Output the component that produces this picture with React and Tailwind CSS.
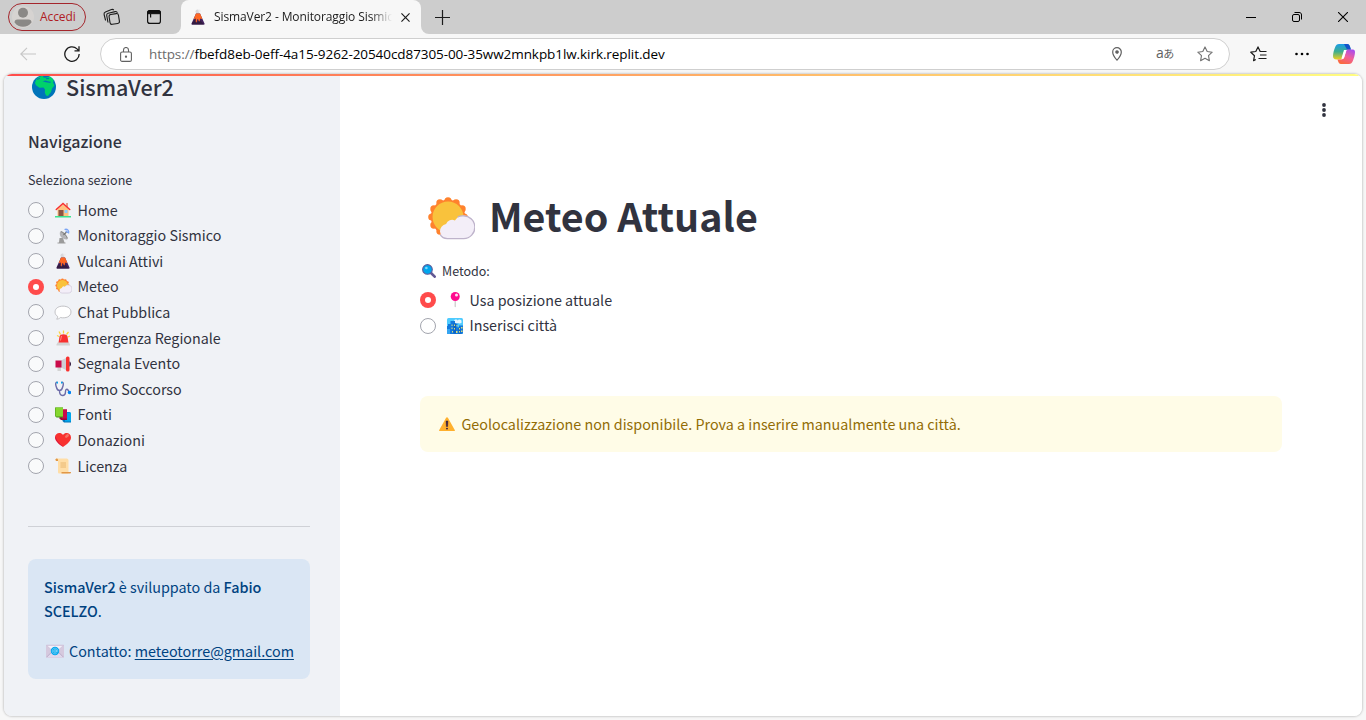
import React from "react";

/* ---------- emoji drawings (32 x 32 grid) ---------- */
const Emoji = ({ className = "w-4 h-4", children }) => (
  <svg viewBox="0 0 32 32" className={`shrink-0 ${className}`} fill="none">{children}</svg>
);

const House = () => (
  <Emoji>
    <path d="M22 2h4v8h-4z" fill="#E39D89" />
    <path d="M5 14 16 5l11 9v15H5z" fill="#FFC280" />
    <path d="M7 16h10v13H7z" fill="#8C5543" />
    <path d="M19 16h6v6h-6z" fill="#8CCDFF" />
    <path d="M2.500 15 16 3l13.500 12" stroke="#F8312F" strokeWidth="3" strokeLinecap="round" />
    <path d="M0 28h32v3H0z" fill="#3BE38F" />
  </Emoji>
);
const Satellite = () => (
  <Emoji>
    <path d="M9 20h7l3 9h2v2H5v-2h3z" fill="#9B9B9B" />
    <path d="M10 8c-2 6 2 14 13 15 2 0 2-1 1.500-2L13 7c-1-1-2.500-.5-3 1z" fill="#B4B4B8" />
    <path d="M12 7c5 2 10 8 13 14" stroke="#8C8C8C" strokeWidth="2.500" />
    <path d="m17 14 6-6" stroke="#777" strokeWidth="2.500" />
    <path d="M19 3c6-2 10 3 8 8M21 6c2 0 4 2 4 4" stroke="#7AA5F5" strokeWidth="2.500" />
  </Emoji>
);
const Volcano = ({ className }) => (
  <Emoji className={className}>
    <circle cx="15" cy="5" r="4" fill="#D8D8DC" /><circle cx="19" cy="3.500" r="2.500" fill="#ECECEF" />
    <path d="M12 9h8l9 20c.5 1.500 0 2-1 2H4c-1 0-1.500-.5-1-2z" fill="#44235E" />
    <path d="M4 28 12 19l3 8 4-6 9 10H4z" fill="#321B41" />
    <path d="M12 9h8l4.500 10c-2 2-3 0-4 0s0 6-2 6-1-5-3-5-1 7-3 7 0-7-1.500-8c-1 0-2 2-3.500 1z" fill="#FF6723" />
  </Emoji>
);
const SunCloud = ({ className }) => (
  <Emoji className={className}>
    <g fill="#FF822D">
      <circle cx="14" cy="14" r="11.500" />
      {[[14, 3.200], [19.400, 4.600], [23.400, 8.600], [24.800, 14], [8.600, 4.600], [4.600, 8.600], [3.200, 14], [4.600, 19.400], [8.600, 23.400]].map(([x, y]) => (
        <circle key={`${x}-${y}`} cx={x} cy={y} r="2.400" />
      ))}
    </g>
    <circle cx="14" cy="14" r="10.300" fill="#F9C23C" />
    <path d="M13.500 28.500a5 5 0 0 1-.8-9.900 4.300 4.300 0 0 1 5.900-2.300A7 7 0 0 1 31.500 21a7.300 7.300 0 0 1-7 7.500z" fill="#F3EEF8" />
    <path d="M20.500 13.900a7.300 7.300 0 0 1 3.700-.6 7.500 7.500 0 0 1 .3 15.100H13.500c-2 0-3.700-.9-4.700-2.600" stroke="#BEB3CB" strokeWidth=".9" />
  </Emoji>
);
const Bubble = () => (
  <Emoji className="w-[18px] h-[17px]">
    <path d="M16 4C7 4 1 8.500 1 15c0 4 2 6.500 5 8.500.3 2-1 4-2 5 3 0 5-1 7-3 10 2 20-1.500 20-10.500C31 8.500 25 4 16 4z" fill="#fff" stroke="#B4B4B8" strokeWidth="1.500" />
  </Emoji>
);
const Siren = () => (
  <Emoji>
    <path d="m8 3 3 6M17 1v6M27 4l-4 5M4 11l4 2M30 12l-4 2" stroke="#FCD53F" strokeWidth="2.500" />
    <path d="M9 13c1-6 15-6 16 0l2 13H7z" fill="#F8312F" />
    <path d="m13 12-2 9" stroke="#FF8A80" strokeWidth="2" />
    <path d="M5 25h23l2 4v2H3v-2z" fill="#D3D3D3" />
  </Emoji>
);
const Megaphone = () => (
  <Emoji>
    <path d="M5 19h7v11H5z" fill="#D3D3D3" />
    <path d="M12 9 24 3v26l-12-6z" fill="#CFCFD4" />
    <path d="M1 9h12v14H1z" fill="#CA0B4A" />
    <rect x="22" y="1" width="7" height="30" rx="3" fill="#F8312F" />
    <path d="M29 11c4 1 4 9 0 10z" fill="#321B41" />
  </Emoji>
);
const Stethoscope = () => (
  <Emoji>
    <path d="M5 3C0 1 1 8 3 13c1 4 4 6 6 6s5-2 6-6c2-5 3-12-2-10M9 19c0 6 2 10 6 10s6-4 6-8 3-6 5-3 1 3 3 4" stroke="#6D6CA8" strokeWidth="2.800" />
    <path d="M3 3h3M12 3h3" stroke="#00A6ED" strokeWidth="3.500" />
    <circle cx="29" cy="23" r="3.500" fill="#0084F5" />
  </Emoji>
);
const Books = () => (
  <Emoji>
    <path d="M15 10h14l3 3v18H18l-3-3z" fill="#0074BA" /><path d="M20 11h12v18H20z" fill="#00A6ED" />
    <path d="M9 5h15v21H12l-3-3z" fill="#990839" /><path d="M14 5h10v18H14z" fill="#CA0B4A" />
    <path d="M0 1h16v20H3l-3-3z" fill="#44911B" /><path d="M1 1h15v18H1z" fill="#86D72F" />
  </Emoji>
);
const HeartEmoji = () => (
  <Emoji>
    <path d="M16 30C9 25 0 19 0 11 0 2 11-1 16 6c5-7 16-4 16 5 0 8-9 14-16 19z" fill="#F8312F" />
    <path d="M5 20C1 15 0 12 1 7c1 8 5 14 15 22-4-2-8-5-11-9z" fill="#CA0B4A" />
    <ellipse cx="24" cy="8" rx="4.500" ry="2.800" transform="rotate(-40 24 8)" fill="#F37366" />
  </Emoji>
);
const Scroll = () => (
  <Emoji>
    <path d="M4 1h19c3 0 4 2 4 4v23c0 2-1 3-3 3H9c-2 0-3-1-3-3V6H2C0 5 1 1 4 1z" fill="#FFDEA7" />
    <path d="M1 3c1-3 5-2 5 1v2H2z" fill="#E19747" />
    <path d="M11 10h11M11 14h11M11 18h11" stroke="#E6B26B" strokeWidth="1.800" />
    <path d="M13 28h19c0 2-1 3-3 3H13z" fill="#E19747" />
  </Emoji>
);
const Mail = () => (
  <Emoji className="w-[18px] h-[18px]">
    <rect x="0" y="5" width="32" height="23" rx="2" fill="#D5C9DE" />
    <path d="m1 27 11-11h8l11 11" stroke="#B4A6C4" strokeWidth="1.500" fill="#E1D8EC" />
    <path d="M1 6h30L19 17h-6z" fill="#F4EFF8" stroke="#C5B8D2" />
    <circle cx="16" cy="16" r="7.500" fill="#00A6ED" />
    <circle cx="16" cy="16" r="2.300" stroke="#9ADDF8" strokeWidth="1.300" />
    <path d="M18.500 13.500v4c1 1.500 2.500.5 2.500-1.500a5 5 0 1 0-2 4" stroke="#9ADDF8" strokeWidth="1.100" />
  </Emoji>
);
const Magnifier = () => (
  <Emoji className="w-[14px] h-[14px]">
    <path d="m20 20 9 9" stroke="#635994" strokeWidth="6" strokeLinecap="round" />
    <circle cx="12.500" cy="12.500" r="11" fill="#00A6ED" stroke="#5A5C9C" strokeWidth="2.600" />
    <circle cx="10" cy="9" r="3" fill="#7CD8FF" />
  </Emoji>
);
const Pin = () => (
  <Emoji>
    <path d="M15 17h3v12c0 2-3 2-3 0z" fill="#D3D3D3" />
    <circle cx="16.500" cy="9" r="9" fill="#FF0A8E" />
    <circle cx="19" cy="6" r="3" fill="#FFE1F2" />
  </Emoji>
);
const City = () => (
  <Emoji>
    <rect width="32" height="32" rx="3" fill="#4ECBFF" />
    <path d="M14 6c2-5 7-2 7-1 3-4 9-1 8 2 2 4-5 5-7 3-4 3-8 0-8-4z" fill="#E8F7FF" />
    <path d="M2 12h5V6h9v5h5v8h3v-4h8v14a3 3 0 0 1-3 3H3a3 3 0 0 1-3-3V16h2z" fill="#1479DC" />
    <path d="M13 11h5v20h-5zM23 19h4v13h-4z" fill="#0B63C4" />
    <path d="M0 22h6v10H3a3 3 0 0 1-3-3z" fill="#35A5F2" />
    <path d="M9 13h2v3H9zM9 19h2v3H9zM14 13h2v3h-2zM14 20h2v3h-2zM24 20h2v3h-2zM24 26h2v3h-2zM28 18h3v3h-3zM28 25h3v3h-3zM10 26h2v3h-2zM18 26h3v4h-3zM19 14h2v3h-2z" fill="#D9DE7A" />
  </Emoji>
);
const Warning = () => (
  <Emoji>
    <path d="M14.200 3.500c.8-1.400 2.800-1.400 3.600 0L31.500 28c.8 1.400 0 2-1 2h-29c-1 0-1.800-.6-1-2z" fill="#FFB02E" />
    <path d="M14.200 10h3.600l-.6 11h-2.400z" fill="#321B41" stroke="#321B41" strokeWidth="1" />
    <circle cx="16" cy="25.200" r="1.900" fill="#321B41" />
  </Emoji>
);
const Globe = () => (
  <svg viewBox="0 0 24 24" className="h-6 w-6 shrink-0">
    <circle cx="12" cy="12" r="12" fill="#0074BA" />
    <path d="M4.200 4.500C6.500 2 9 .9 11.500.6L11 2.200l2.500.6L18 1.600c1.600 1 2.800 2.200 3.700 3.600l-.7 2.300 1.500 3-2.500 3-1 3.500-3 4-2-.5-1.200-3 .2-2.900-1.500-2.100-4 .3L4 10.300 3 8z" fill="#00D26A" />
    <path d="m10.500 6.200 3-.7 3.500 1 2 .3-.7 1.200-4.500-.8z" fill="#0074BA" />
    <path d="m5 4.500 3-1.200M14 3.800l3-.4" stroke="#0074BA" strokeWidth="1" />
  </svg>
);

/* ---------- browser chrome ---------- */
function TabBar() {
  return (
    <div className="flex h-[34px] items-stretch bg-[#f7f7f7]">
      <div className="flex w-[181px] items-center rounded-br-[8px] bg-[#cdcdcd] pl-2">
        <div className="flex h-7 w-[78px] items-center rounded-full border border-[#a4262c] pl-[3px]">
          <svg viewBox="0 0 22 22" className="h-[22px] w-[22px]">
            <circle cx="11" cy="11" r="11" fill="#d6d3d1" />
            <circle cx="11" cy="6.800" r="5" fill="#8a8886" />
            <path d="M2.500 16.500c0-2 1-3 3-3h11c2 0 3 1 3 3a10.500 10.500 0 0 1-17 0z" fill="#8a8886" />
          </svg>
          <span className="ml-[6px] text-[12px] tracking-[-0.1px] text-[#b01c24]">Accedi</span>
        </div>
        <svg viewBox="0 0 18 18" className="ml-[17px] h-[18px] w-[18px]" fill="none" stroke="#1b1b1b" strokeWidth="1.100">
          <rect x="6.500" y="6" width="9.500" height="10" rx="2" transform="rotate(-9 11 11)" />
          <path d="M5 14.500 3.700 7.500c-.2-1.300.4-2 1.500-2.300l7-1.600c1-.2 1.900.4 2.200 1.300M2.600 12.500 1.100 6.500c-.3-1.300.3-2.100 1.300-2.500L8.500 1.600c1-.4 1.700-.2 2.300.6" />
        </svg>
        <svg viewBox="0 0 14 14" className="ml-[26px] h-[14px] w-[14px]" fill="none" stroke="#111">
          <rect x=".6" y=".6" width="12.800" height="12.800" rx="2.200" strokeWidth="1.200" />
          <path d="M.6 2.800C.6 1.300 1.300.6 2.800.6h8.400c1.500 0 2.200.7 2.200 2.200v.9H.6z" fill="#111" />
          <path d="M3.600 4v3.500" strokeWidth="1.200" />
        </svg>
      </div>
      <div className="flex bg-[#cdcdcd]">
        <div className="flex w-[240px] items-center rounded-t-[8px] bg-[#f7f7f7] pl-[9px]">
          <Volcano className="h-4 w-4" />
          <span className="ml-2 w-[178px] overflow-hidden whitespace-nowrap bg-gradient-to-r from-[#1b1b1b] from-88% to-transparent bg-clip-text text-[12px] tracking-[-0.1px] text-transparent">
            SismaVer2 - Monitoraggio Sismico
          </span>
          <svg viewBox="0 0 10 10" className="ml-[9px] h-[9px] w-[9px] shrink-0" stroke="#1b1b1b" strokeWidth="1.300"><path d="m.5.5 9 9m0-9-9 9" /></svg>
        </div>
      </div>
      <div className="flex flex-1 items-center rounded-bl-[8px] bg-[#cdcdcd] pl-[14px]">
        <svg viewBox="0 0 15 15" className="h-[15px] w-[15px]" stroke="#1b1b1b" strokeWidth="1.200"><path d="M7.500 0v15M0 7.500h15" /></svg>
      </div>
      <div className="flex items-center bg-[#cdcdcd] pr-[18px]">
        <svg viewBox="0 0 10 10" className="h-[10px] w-[10px]" stroke="#000"><path d="M0 5.500h10" /></svg>
        <svg viewBox="0 0 10 10" className="ml-9 h-[10px] w-[10px]" fill="none" stroke="#000"><rect x=".5" y="2.500" width="7" height="7" rx="1.500" /><path d="M2.500.5H7c1.700 0 2.500.8 2.500 2.500v4.500" /></svg>
        <svg viewBox="0 0 10 10" className="ml-9 h-[10px] w-[10px]" stroke="#000" strokeWidth="1.100"><path d="m0 0 10 10M10 0 0 10" /></svg>
      </div>
    </div>
  );
}

const STAR = "m8 .9 2.200 4.600 5 .7-3.700 3.500.9 5L8 12.300l-4.400 2.400.9-5L.8 6.200l5-.7z";

function AddressBar() {
  return (
    <div className="flex h-10 items-center bg-[#f7f7f7] pl-5">
      <svg viewBox="0 0 16 14" className="h-[14px] w-4" fill="none" stroke="#c6c6c6" strokeWidth="1.100"><path d="M16 7H.8M7 .8.8 7 7 13.200" /></svg>
      <svg viewBox="0 0 16 16" className="ml-7 h-4 w-4" fill="none" stroke="#1b1b1b" strokeWidth="1.300"><path d="M15.200 8A7.200 7.200 0 1 1 13 2.900l1.700 1.700M15 .3v4.500h-4.500" /></svg>
      <div className="ml-5 flex h-8 w-[1130px] items-center rounded-full border border-[#cfcfcf] bg-white pl-[19px]">
        <svg viewBox="0 0 12 15" className="h-[15px] w-3" fill="none" stroke="#616161" strokeWidth="1.100"><rect x=".6" y="5" width="10.800" height="9.400" rx="1.500" /><path d="M3.500 5V3a2.500 2.500 0 0 1 5 0v2" /><circle cx="6" cy="9.700" r=".6" fill="#616161" /></svg>
        <span className="ml-[17px] flex-1 whitespace-nowrap pt-px text-[13.500px] tracking-[-0.075px] text-black"><span className="text-[#6b6b6b]">https://</span>fbefd8eb-0eff-4a15-9262-20540cd87305-00-35ww2mnkpb1lw.kirk.replit.dev</span>
        <svg viewBox="0 0 10 14" className="h-[14px] w-[10px]" fill="none" stroke="#616161" strokeWidth="1.200"><path d="M5 13.200C2.500 10.500.7 7.800.7 5a4.300 4.300 0 0 1 8.600 0c0 2.800-1.800 5.500-4.300 8.200z" /><circle cx="5" cy="5" r="1.200" fill="#616161" /></svg>
        <span className="ml-[34px] w-[19px] whitespace-nowrap pb-[2px] font-['Open_Sans','Noto_Sans_CJK_JP',sans-serif] text-[14px] leading-none tracking-[-0.5px] text-[#616161]">a<span className="text-[11px]">あ</span></span>
        <svg viewBox="0 0 16 16" className="ml-[22px] mr-4 h-4 w-4" fill="none" stroke="#717171" strokeWidth="1.100" strokeLinejoin="round"><path d={STAR} /></svg>
      </div>
      <svg viewBox="0 0 17 16" className="ml-5 h-4 w-[17px]" fill="none" stroke="#1b1b1b" strokeWidth="1.200" strokeLinejoin="round"><path d="M5.800 13.500 3.600 14.700l.9-5L.8 6.200l5-.7L8 .9l2.200 4.600h6.300M10 9h6.500M8.500 12.500h8" /></svg>
      <svg viewBox="0 0 14 4" className="ml-7 h-1 w-[14px]"><circle cx="1.500" cy="2" r="1.300" /><circle cx="7" cy="2" r="1.300" /><circle cx="12.500" cy="2" r="1.300" /></svg>
      <svg viewBox="0 0 22 20" className="ml-[24px] h-5 w-[22px]">
        <defs>
          <linearGradient id="cpA" x1="0" y1="0" x2="0" y2="1"><stop stopColor="#1B9DE8" /><stop offset=".5" stopColor="#3FAE8C" /><stop offset="1" stopColor="#F2CF1D" /></linearGradient>
          <linearGradient id="cpB" x1=".8" y1="0" x2=".3" y2="1"><stop stopColor="#A84BF0" /><stop offset=".5" stopColor="#F0609A" /><stop offset="1" stopColor="#FB6A3C" /></linearGradient>
        </defs>
        <path d="M6 0h8c2 0 2.500 1.500 3 3l.8 3H14c-2 0-3 1-3.500 3L9 14c-.4 1-1 1.500-2 1.500H3.500C1 15.500 0 14 0 12c0-3 1.200-6.500 2.200-9C3 1 4 0 6 0z" fill="url(#cpA)" />
        <path d="M11 0h3.200c2 0 2.500 1.500 3 3l.8 2.500h-4z" fill="#1453C9" />
        <path d="M16 20H8c-2 0-2.500-1.500-3-3l-.5-1.500H8c2 0 3-1 3.500-3L13 7c.4-1 1-1.500 2-1.500h3.500C21 5.500 22 6 22 8c0 3-1.200 6.500-2.200 9C19 19 18 20 16 20z" fill="url(#cpB)" />
        <path d="M11 6h2.600L10.800 14.500H8.500z" fill="#fff" />
      </svg>
    </div>
  );
}

/* ---------- page ---------- */
const Radio = ({ on }) =>
  on ? (
    <span className="flex h-4 w-4 shrink-0 items-center justify-center rounded-full bg-[#ff4b4b]"><span className="h-1.5 w-1.5 rounded-full bg-white" /></span>
  ) : (
    <span className="h-4 w-4 shrink-0 rounded-full border border-[#a3a5ae] bg-white/60" />
  );

const Option = ({ on, icon, label }) => (
  <div className="flex h-[25.600px] items-center">
    <Radio on={on} />
    <span className="ml-[10px] flex w-[18px] shrink-0 justify-center">{icon}</span>
    <span className="ml-[5.500px] whitespace-nowrap pb-[0.600px] text-[14.300px] leading-none">{label}</span>
  </div>
);

const SECTIONS = [
  [<House />, "Home"],
  [<Satellite />, "Monitoraggio Sismico"],
  [<Volcano />, "Vulcani Attivi"],
  [<SunCloud className="h-[17px] w-[17px]" />, "Meteo"],
  [<Bubble />, "Chat Pubblica"],
  [<Siren />, "Emergenza Regionale"],
  [<Megaphone />, "Segnala Evento"],
  [<Stethoscope />, "Primo Soccorso"],
  [<Books />, "Fonti"],
  [<HeartEmoji />, "Donazioni"],
  [<Scroll />, "Licenza"],
];

function Sidebar() {
  return (
    <aside className="flex w-[336px] shrink-0 flex-col bg-[#f0f2f6] pl-6 pr-[30px]">
      <div className="flex h-[26px] items-center pl-1">
        <Globe />
        <h2 className="ml-[10px] text-[21.600px] font-medium leading-none">SismaVer2</h2>
      </div>
      <h3 className="mt-[29px] flex h-6 items-center text-[16px] font-medium leading-none">Navigazione</h3>
      <p className="mt-[17px] flex h-5 items-center text-[12.600px] leading-none">Seleziona sezione</p>
      <div className="mt-[7.300px]">
        {SECTIONS.map(([icon, label]) => <Option key={label} icon={icon} label={label} on={label === "Meteo"} />)}
      </div>
      <hr className="mt-[46.700px] border-[#cfd1d6]" />
      <div className="mt-8 h-[120px] rounded-lg bg-[#dae6f4] px-4 pt-4 text-[14.350px] leading-6 text-[#004280]">
        <p className="whitespace-nowrap"><b className="font-medium">SismaVer2</b> è sviluppato da <b className="font-medium">Fabio<br />SCELZO</b>.</p>
        <p className="mt-4 flex items-center whitespace-nowrap"><span className="ml-[2px] mr-[5px]"><Mail /></span>Contatto:&nbsp;<a className="underline underline-offset-2">meteotorre@gmail.com</a></p>
      </div>
    </aside>
  );
}

function Main() {
  return (
    <main className="flex flex-1 flex-col bg-white pl-20">
      <div className="flex justify-end pr-9 pt-[29px]">
        <svg viewBox="0 0 4 14" className="h-[14px] w-1" fill="#31333f"><circle cx="2" cy="2" r="1.900" /><circle cx="2" cy="7" r="1.900" /><circle cx="2" cy="12" r="1.900" /></svg>
      </div>
      <div className="mt-[72px] flex h-[56px] items-center pl-[7px]">
        <SunCloud className="mt-[5px] h-[48px] w-[48px]" />
        <h1 className="ml-[14px] whitespace-nowrap pb-[5px] text-[39.400px] font-bold leading-none">Meteo Attuale</h1>
      </div>
      <div className="mt-4 flex h-5 items-center pl-[2px] text-[12.500px] leading-none"><Magnifier /><span className="ml-[6px]">Metodo:</span></div>
      <div className="mt-[6.400px]">
        <Option on icon={<Pin />} label="Usa posizione attuale" />
        <Option icon={<City />} label="Inserisci città" />
      </div>
      <div className="mt-[57.400px] flex h-14 w-[862px] items-center rounded-lg bg-[#fffce7] pl-[19px] text-[14.320px] leading-none text-[#926c05]">
        <Warning /><span className="ml-[6.500px]">Geolocalizzazione non disponibile. Prova a inserire manualmente una città.</span>
      </div>
    </main>
  );
}

export default function App() {
  return (
    <div className="flex h-[720px] w-[1366px] flex-col overflow-hidden bg-[#f7f7f7] font-['Open_Sans',sans-serif]">
      <TabBar />
      <AddressBar />
      <div className="relative mx-1 flex h-[642px] overflow-hidden rounded-lg font-['Noto_Sans_CJK_SC',sans-serif] text-[#31333f] shadow-[0_0_2px_1px_rgba(0,0,0,0.16)]">
        <div className="absolute inset-x-0 top-0 h-[2px] bg-gradient-to-r from-[#ff4b4b] to-[#fffd80]" />
        <Sidebar />
        <Main />
      </div>
    </div>
  );
}
